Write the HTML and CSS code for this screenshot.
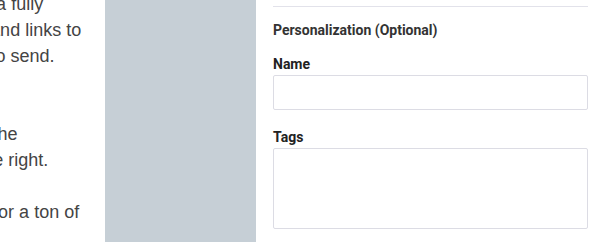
FILE: index.html
```html
<!DOCTYPE html>
<html lang="en">
<head>
    <meta charset="UTF-8">
    <title>Compose email</title>
    <link rel="stylesheet" href="styles.css">
</head>
<body>

<div class="layout">
    <div class="intro">
        <div class="intro-text">
            <p>Put together an email with a fully<br>
               customizable design, text and links to<br>
               all the content you'd want to send.</p>
            <p>Then fill in<br>
               the recipient's details with the<br>
               personalization panel to the right.</p>
            <p>These fields may be used for a ton of<br>
               different things.</p>
        </div>
    </div>

    <div class="gutter"></div>

    <div class="panel">
        <div class="section-end"></div>
        <h3 class="section-title">Personalization (Optional)</h3>
        <form name="personalForm">
            <label class="field-label" for="name">Name</label>
            <input type="text" id="name" name="name" class="field-input">

            <label class="field-label" for="tags">Tags</label>
            <textarea id="tags" name="tags" class="field-area"></textarea>
        </form>
    </div>
</div>

</body>
</html>
```

FILE: styles.css
```css
body {
    margin: 0;
    background-color: #fff;
    font-family: Roboto, "Liberation Sans", sans-serif;
}

.layout {
    display: flex;
    height: 242px;
    overflow: hidden;
}

.intro {
    width: 105px;
    flex-shrink: 0;
    overflow: hidden;
}

.intro-text {
    margin: -9px 0 0 -217px;
    white-space: nowrap;
    font-family: "Liberation Sans", Arial, sans-serif;
    font-size: 18px;
    line-height: 26px;
    color: #444;
}

.intro-text p {
    margin: 0 0 26px;
}

.gutter {
    width: 151px;
    flex-shrink: 0;
    background-color: #c6cfd6;
}

.panel {
    flex: 1;
    padding: 0 12px 0 17px;
}

.section-end {
    height: 6px;
    border-bottom: 1px solid #e2e2ea;
}

.section-title {
    margin: 14px 0 0;
    font-size: 14px;
    line-height: 18px;
    font-weight: 700;
    color: #333;
}

.field-label {
    display: block;
    margin-top: 15px;
    margin-bottom: 1px;
    font-size: 14px;
    line-height: 20px;
    font-weight: 700;
    color: #222;
}

.field-input, .field-area {
    display: block;
    width: 100%;
    box-sizing: border-box;
    border: 1px solid #dcdce4;
    border-radius: 2px;
    background-color: #fff;
    padding: 6px 8px;
    margin: 0;
    font-family: inherit;
    font-size: 13px;
}

.field-input {
    height: 35px;
}

.field-area {
    height: 81px;
    resize: none;
}

.field-input + .field-label {
    margin-top: 17px;
}
```
